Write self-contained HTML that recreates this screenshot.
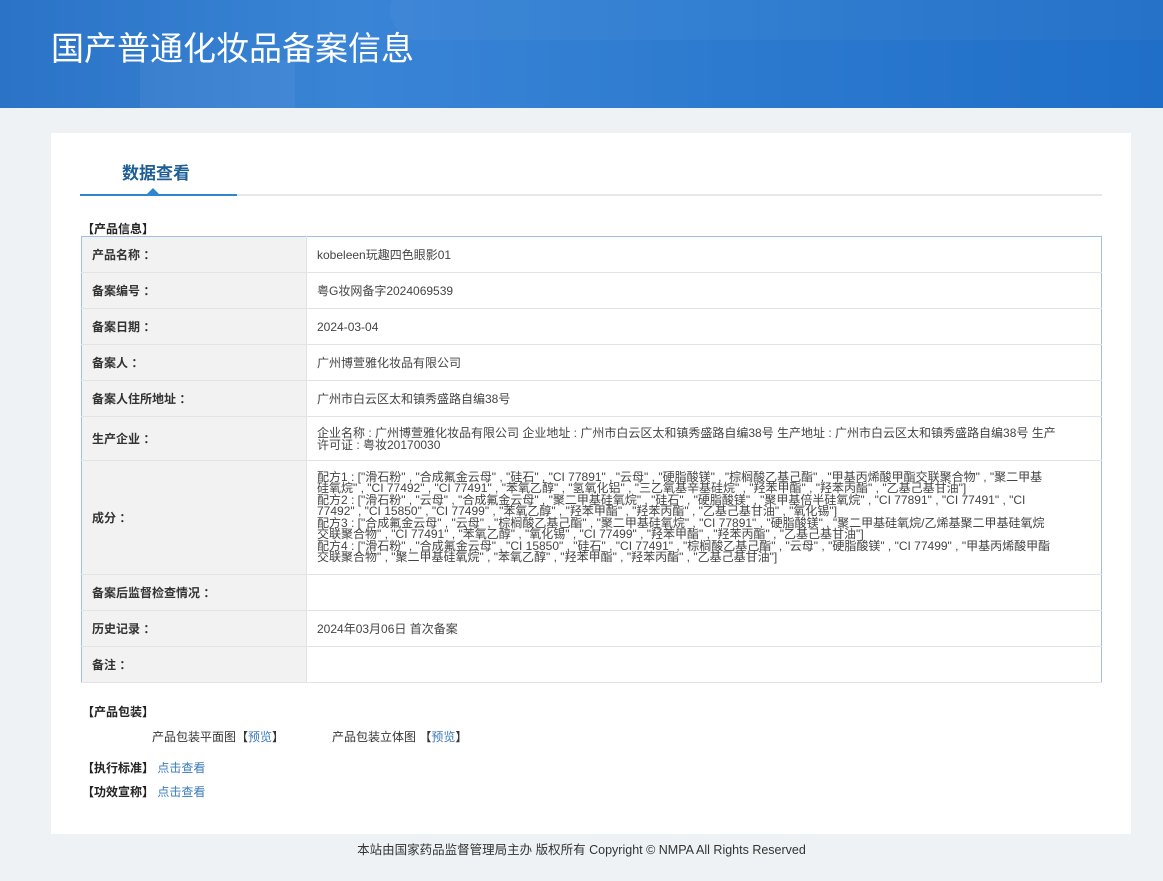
<!DOCTYPE html>
<html><head><meta charset="utf-8"><style>
body{margin:0;width:1163px;height:881px;background:#eef2f5;font-family:"Liberation Sans","Noto Sans CJK SC",sans-serif;font-size:12px;color:#333;position:relative;overflow:hidden}
.hd{position:absolute;left:0;top:0;width:1163px;height:108px;background:linear-gradient(90deg,#2a73c6 0%,#3a84d6 30%,#2d7bd0 60%,#1f6ec8 100%);overflow:hidden}
.hd .b{position:absolute;left:140px;top:60px;width:155px;height:60px;background:rgba(255,255,255,.05)}
.hd .c{position:absolute;left:390px;top:-20px;width:800px;height:60px;border-radius:40px;background:rgba(255,255,255,.03)}
.hd h1{position:absolute;left:51px;top:22px;margin:0;font-weight:normal;color:#fff;font-size:33px;font-family:"Noto Sans CJK SC",sans-serif}
.card{position:absolute;left:51px;top:133px;width:1080px;height:701px;background:#fff}
.tab{position:absolute;left:71px;top:26px;font-size:17px;font-weight:bold;color:#1d5e96}
.tl{position:absolute;left:29px;top:61px;width:1022px;height:2px;background:#e6e9ec}
.tb{position:absolute;left:29px;top:61px;width:157px;height:2px;background:#2e86cf}
.tri{position:absolute;left:96px;top:55px;width:0;height:0;border-left:6px solid transparent;border-right:6px solid transparent;border-bottom:6px solid #2e86cf}
.sec{position:absolute;font-weight:bold;color:#222}
table{position:absolute;left:30px;top:103px;width:1021px;border-collapse:collapse;border:1px solid #9ec1e3}
td{border-bottom:1px solid #e3e3e3;padding:0 10px;font-size:12px;line-height:12px}
td.l{width:204px;background:#f2f2f2;font-weight:bold;color:#333;border-right:1px solid #e3e3e3}
td.v{color:#444}
a{color:#3a7ab8;text-decoration:none}
.ft{position:absolute;left:0;width:1163px;top:839px;text-align:center;color:#333;font-size:12.5px}
</style></head><body>
<div class="hd"><div class="b"></div><div class="c"></div><h1>国产普通化妆品备案信息</h1></div>
<div class="card">
<div class="tab">数据查看</div>
<div class="tl"></div><div class="tb"></div><div class="tri"></div>
<div class="sec" style="left:31px;top:87px">【产品信息】</div>
<table>
<tr style="height:36px"><td class="l">产品名称 ：</td><td class="v">kobeleen玩趣四色眼影01</td></tr>
<tr style="height:36px"><td class="l">备案编号 ：</td><td class="v">粤G妆网备字2024069539</td></tr>
<tr style="height:36px"><td class="l">备案日期 ：</td><td class="v">2024-03-04</td></tr>
<tr style="height:36px"><td class="l">备案人 ：</td><td class="v">广州博萱雅化妆品有限公司</td></tr>
<tr style="height:36px"><td class="l">备案人住所地址 ：</td><td class="v">广州市白云区太和镇秀盛路自编38号</td></tr>
<tr style="height:44px"><td class="l">生产企业 ：</td><td class="v" style="padding-right:45px">企业名称 : 广州博萱雅化妆品有限公司 企业地址 : 广州市白云区太和镇秀盛路自编38号 生产地址 : 广州市白云区太和镇秀盛路自编38号 生产许可证 : 粤妆20170030</td></tr>
<tr style="height:114px"><td class="l">成分 ：</td><td class="v" style="line-height:11.5px;padding-right:50px">配方1 : ["滑石粉" , "合成氟金云母" , "硅石" , "CI 77891" , "云母" , "硬脂酸镁" , "棕榈酸乙基己酯" , "甲基丙烯酸甲酯交联聚合物" , "聚二甲基硅氧烷" , "CI 77492" , "CI 77491" , "苯氧乙醇" , "氢氧化铝" , "三乙氧基辛基硅烷" , "羟苯甲酯" , "羟苯丙酯" , "乙基己基甘油"]<br>配方2 : ["滑石粉" , "云母" , "合成氟金云母" , "聚二甲基硅氧烷" , "硅石" , "硬脂酸镁" , "聚甲基倍半硅氧烷" , "CI 77891" , "CI 77491" , "CI 77492" , "CI 15850" , "CI 77499" , "苯氧乙醇" , "羟苯甲酯" , "羟苯丙酯" , "乙基己基甘油" , "氧化锡"]<br>配方3 : ["合成氟金云母" , "云母" , "棕榈酸乙基己酯" , "聚二甲基硅氧烷" , "CI 77891" , "硬脂酸镁" , "聚二甲基硅氧烷/乙烯基聚二甲基硅氧烷交联聚合物" , "CI 77491" , "苯氧乙醇" , "氧化锡" , "CI 77499" , "羟苯甲酯" , "羟苯丙酯" , "乙基己基甘油"]<br>配方4 : ["滑石粉" , "合成氟金云母" , "CI 15850" , "硅石" , "CI 77491" , "棕榈酸乙基己酯" , "云母" , "硬脂酸镁" , "CI 77499" , "甲基丙烯酸甲酯交联聚合物" , "聚二甲基硅氧烷" , "苯氧乙醇" , "羟苯甲酯" , "羟苯丙酯" , "乙基己基甘油"]</td></tr>
<tr style="height:36px"><td class="l">备案后监督检查情况 ：</td><td class="v"></td></tr>
<tr style="height:36px"><td class="l">历史记录 ：</td><td class="v">2024年03月06日 首次备案</td></tr>
<tr style="height:36px"><td class="l">备注 ：</td><td class="v"></td></tr>
</table>
<div class="sec" style="left:31px;top:570px">【产品包装】</div>
<div style="position:absolute;left:101px;top:595px">产品包装平面图【<a>预览</a>】</div>
<div style="position:absolute;left:281px;top:595px">产品包装立体图 【<a>预览</a>】</div>
<div class="sec" style="left:31px;top:626px">【执行标准】 <a style="font-weight:normal">点击查看</a></div>
<div class="sec" style="left:31px;top:650px">【功效宣称】 <a style="font-weight:normal">点击查看</a></div>
</div>
<div class="ft">本站由国家药品监督管理局主办 版权所有 Copyright © NMPA All Rights Reserved</div>
</body></html>
